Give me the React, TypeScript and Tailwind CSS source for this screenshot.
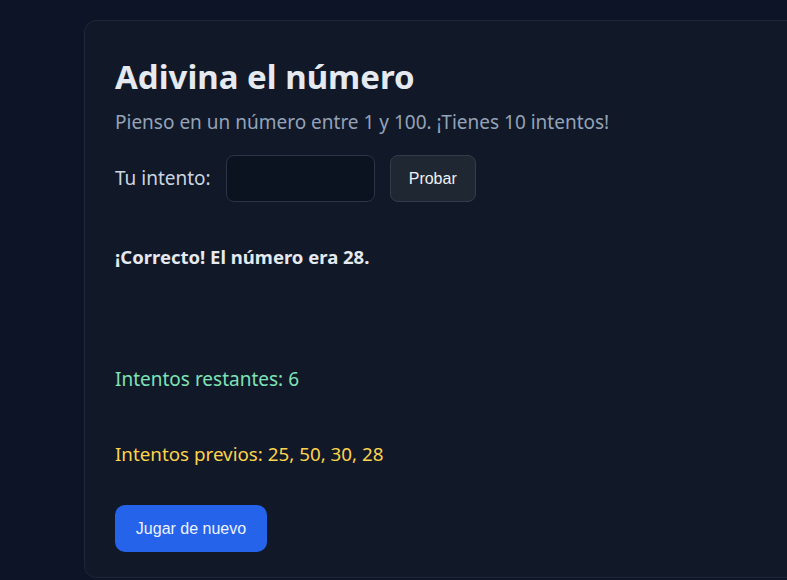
import { useState } from "react";

export default function App() {
  const [guess, setGuess] = useState("");
  const previous = [25, 50, 30, 28];

  return (
    <div className="min-h-[580px] bg-[#0e1427] pt-[20px] pl-[84px] overflow-hidden" style={{ fontFamily: '"Noto Sans", sans-serif' }}>
      <div className="w-[760px] h-[558px] rounded-[12px] border border-[#1f2737] bg-[#111827] px-[30px] pt-[36px]">
        <h1 className="text-[33px] leading-[40px] font-bold text-[#e5e9f0]">Adivina el número</h1>
        <p className="mt-[12px] text-[19px] leading-[26px] text-[#94a3b8]">Pienso en un número entre 1 y 100. ¡Tienes 10 intentos!</p>

        <div className="mt-[20px] flex items-center gap-[15px]">
          <label className="text-[19px] text-[#cbd5e1]">Tu intento:</label>
          <input
            value={guess}
            onChange={(e) => setGuess(e.target.value)}
            className="w-[149px] h-[47px] rounded-[8px] border border-[#2b3546] bg-[#0b1220] px-3 text-[#e5e7eb] outline-none"
          />
          <button className="h-[47px] px-[18px] rounded-[8px] border border-[#323c4c] bg-[#1f2733] text-[#eef1f5] text-[16px]" style={{ fontFamily: '"Liberation Sans", Arial, sans-serif' }}>
            Probar
          </button>
        </div>

        <p className="mt-[42px] text-[18.5px] leading-[26px] font-bold text-[#e5e9f0]">¡Correcto! El número era 28.</p>

        <p className="mt-[96px] text-[19px] leading-[26px] text-[#7ee2b8]">Intentos restantes: 6</p>

        <p className="mt-[49px] text-[18.8px] leading-[26px] text-[#fcd34d]">Intentos previos: {previous.join(", ")}</p>

        <button className="mt-[38px] h-[47px] w-[152px] rounded-[10px] bg-[#2563eb] text-[16px] text-[#eef3ff]" style={{ fontFamily: '"Liberation Sans", Arial, sans-serif' }}>
          Jugar de nuevo
        </button>
      </div>
    </div>
  );
}
